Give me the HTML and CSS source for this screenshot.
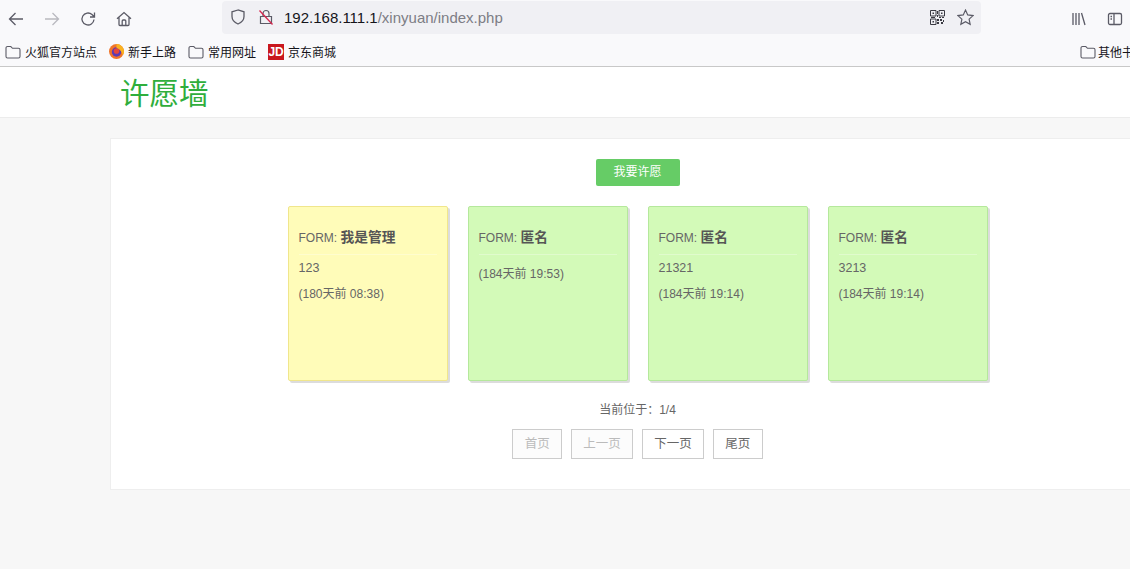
FILE: index.html
```html
<!DOCTYPE html>
<html lang="zh-CN">
<head>
    <meta charset="UTF-8">
    <meta name="viewport" content="width=device-width, initial-scale=1.0">
    <title>许愿墙</title>
    <link rel="stylesheet" href="styles.css">
</head>
<body>

<div class="browser">
    <div class="toolbar">
        <div class="nav-buttons">
            <svg class="tool-icon" viewBox="0 0 16 16"><path d="M15 8H1.500M7.500 2 1.500 8l6 6"/></svg>
            <svg class="tool-icon faded" viewBox="0 0 16 16"><path d="M1 8h13.500M8.500 2l6 6-6 6"/></svg>
            <svg class="tool-icon" viewBox="0 0 16 16"><path d="M14 8.500A6 6 0 1 1 12 3.500L14.500 6M14.500 1.500V6H10"/></svg>
            <svg class="tool-icon" viewBox="0 0 16 16"><path d="M1 7.800 8 1.500l7 6.300M3 6.500v7a1 1 0 0 0 1 1h8a1 1 0 0 0 1-1v-7M6.200 14.500V10a1 1 0 0 1 1-1h1.600a1 1 0 0 1 1 1v4.500"/></svg>
        </div>
        <div class="urlbar">
            <svg class="shield" viewBox="0 0 16 16"><path d="M8 1 2 2.800v4.700c0 3.500 2.600 6 6 7.500 3.400-1.500 6-4 6-7.500V2.800z"/></svg>
            <svg class="lock" viewBox="0 0 16 16"><path class="lock-body" d="M5 7.500V4.500a3 3 0 0 1 6 0v3M2.500 7.500h11v7h-11z"/><path class="lock-slash" d="M1.500 1.500l13 14"/></svg>
            <span class="url"><span class="url-host">192.168.111.1</span>/xinyuan/index.php</span>
            <svg class="qr" viewBox="0 0 15 15"><path d="M.5.500h5.500v5.500H.5zM9 .5h5.500v5.500H9zM.5 9h5.500v5.500H.5z"/><path class="qr-fill" d="M2.500 2.500h1.500V4H2.500zM11 2.500h1.500V4H11zM2.500 11H4v1.500H2.500zM7 1h1v3H7zM7 5h1v2H7zM1 7h4v1H1zM9 7h2v1H9zM12 7h2v1h-2zM7 9h2v2H7zM10 9h2v2h-2zM13 10h1v2h-1zM7 12h2v2H7zM11 12h2v2h-2z"/></svg>
            <svg class="star" viewBox="0 0 16 16"><path d="m8 1 2.100 4.600 5 .6-3.700 3.300 1 4.900L8 12l-4.400 2.400 1-4.900L.9 6.200l5-.6z"/></svg>
        </div>
        <div class="side-buttons">
            <svg class="tool-icon" viewBox="0 0 16 16"><path d="M2 2v12M5 2v12M8 2v12M10.500 2l3.500 12"/></svg>
            <svg class="tool-icon" viewBox="0 0 16 16"><path d="M3 2.500h10a1.500 1.500 0 0 1 1.500 1.500v8a1.500 1.500 0 0 1-1.500 1.500H3A1.500 1.500 0 0 1 1.500 12V4A1.500 1.500 0 0 1 3 2.500zM7 2.500v11M3.500 5.500h1.500M3.500 8h1.500"/></svg>
        </div>
    </div>
    <div class="bookmarks">
        <span class="bookmark">
            <svg class="folder" viewBox="0 0 16 14"><path d="M1 3a1.500 1.500 0 0 1 1.500-1.500h3.300l1.700 1.800h6A1.500 1.500 0 0 1 15 4.800v6.700a1.500 1.500 0 0 1-1.500 1.500h-11A1.500 1.500 0 0 1 1 11.500z"/></svg>
            火狐官方站点
        </span>
        <span class="bookmark">
            <svg class="fav" viewBox="0 0 16 16"><circle cx="8" cy="8" r="8" fill="#f0752a"/><circle cx="8" cy="8.500" r="5" fill="#5b3bb5"/><path d="M8 0a8 8 0 0 1 8 8c0 1.500-.5 3-1.500 4-.3-3.500-2.500-6.500-6.500-7.500z" fill="#f9b320"/><circle cx="8" cy="7.500" r="3" fill="#e5463d"/></svg>
            新手上路
        </span>
        <span class="bookmark">
            <svg class="folder" viewBox="0 0 16 14"><path d="M1 3a1.500 1.500 0 0 1 1.500-1.500h3.300l1.700 1.800h6A1.500 1.500 0 0 1 15 4.800v6.700a1.500 1.500 0 0 1-1.500 1.500h-11A1.500 1.500 0 0 1 1 11.500z"/></svg>
            常用网址
        </span>
        <span class="bookmark">
            <span class="jd">JD</span>
            京东商城
        </span>
        <span class="bookmark other">
            <svg class="folder" viewBox="0 0 16 14"><path d="M1 3a1.500 1.500 0 0 1 1.500-1.500h3.300l1.700 1.800h6A1.500 1.500 0 0 1 15 4.800v6.700a1.500 1.500 0 0 1-1.500 1.500h-11A1.500 1.500 0 0 1 1 11.500z"/></svg>
            其他书签
        </span>
    </div>
</div>

<div class="header">
    <h1 class="logo">许愿墙</h1>
</div>

<div class="main">
    <a class="wish-btn">我要许愿</a>

    <div class="notes">
        <div class="note yellow">
            <div class="note-from">FORM: <b>我是管理</b></div>
            <div class="note-text">123</div>
            <div class="note-time">(180天前 08:38)</div>
        </div>
        <div class="note">
            <div class="note-from">FORM: <b>匿名</b></div>
            <div class="note-text"></div>
            <div class="note-time">(184天前 19:53)</div>
        </div>
        <div class="note">
            <div class="note-from">FORM: <b>匿名</b></div>
            <div class="note-text">21321</div>
            <div class="note-time">(184天前 19:14)</div>
        </div>
        <div class="note">
            <div class="note-from">FORM: <b>匿名</b></div>
            <div class="note-text">3213</div>
            <div class="note-time">(184天前 19:14)</div>
        </div>
    </div>

    <div class="page-info">当前位于：1/4</div>
    <div class="pager">
        <a class="disabled">首页</a>
        <a class="disabled">上一页</a>
        <a>下一页</a>
        <a>尾页</a>
    </div>
</div>

</body>
</html>
```

FILE: styles.css
```css
html, body {
    overflow: hidden;
}
body {
    margin: 0;
    height: 569px;
    background-color: #f7f7f7;
    font-family: "Liberation Sans", "Noto Sans CJK SC", sans-serif;
    color: #666;
}

/* browser chrome */
.browser {
    background-color: #f9f9fb;
    border-bottom: 1px solid #c8c8c8;
    height: 66px;
}
.toolbar {
    height: 37px;
    display: flex;
    align-items: center;
}
.nav-buttons {
    display: flex;
    gap: 20px;
    padding-left: 8px;
    width: 222px;
    box-sizing: border-box;
}
.tool-icon {
    width: 16px;
    height: 16px;
    fill: none;
    stroke: #5b5b66;
    stroke-width: 1.300;
    flex: none;
}
.tool-icon.faded {
    stroke: #b9b9bf;
}
.urlbar {
    width: 759px;
    height: 33px;
    margin-top: -3px;
    background-color: #f0f0f4;
    border-radius: 4px;
    display: flex;
    align-items: center;
    padding: 0 8px;
    box-sizing: border-box;
}
.shield {
    width: 16px;
    height: 16px;
    fill: none;
    stroke: #5b5b66;
    stroke-width: 1.300;
    flex: none;
}
.lock {
    width: 16px;
    height: 16px;
    margin-left: 12px;
    fill: none;
    flex: none;
}
.lock-body {
    stroke: #5b5b66;
    stroke-width: 1.200;
}
.lock-slash {
    stroke: #d7264f;
    stroke-width: 1.300;
}
.url {
    margin-left: 10px;
    padding-top: 1px;
    font-size: 15px;
    color: #7d7d85;
    flex: 1;
}
.url-host {
    color: #15141a;
}
.qr {
    width: 15px;
    height: 15px;
    fill: none;
    stroke: #3a3a42;
    stroke-width: 1;
    flex: none;
}
.qr-fill {
    fill: #3a3a42;
    stroke: none;
}
.star {
    width: 17px;
    height: 17px;
    margin-left: 12px;
    margin-right: -1px;
    fill: none;
    stroke: #5b5b66;
    stroke-width: 1.100;
    flex: none;
}
.side-buttons {
    display: flex;
    gap: 20px;
    margin-left: 90px;
}
.bookmarks {
    height: 29px;
    display: flex;
    align-items: center;
    padding-left: 5px;
    position: relative;
    font-size: 12px;
    color: #15141a;
}
.bookmark {
    display: flex;
    align-items: center;
    gap: 4px;
    margin-right: 12px;
    white-space: nowrap;
}
.bookmark.other {
    position: absolute;
    left: 1080px;
    top: 6px;
    gap: 2px;
}
.folder {
    width: 16px;
    height: 14px;
    fill: none;
    stroke: #5b5b66;
    stroke-width: 1.100;
}
.fav {
    width: 15px;
    height: 15px;
}
.jd {
    width: 16px;
    height: 16px;
    background-color: #c9171e;
    color: #fff;
    font-size: 12px;
    font-weight: bold;
    line-height: 16px;
    text-align: center;
}

/* page */
.header {
    height: 50px;
    background: #fff;
    border-bottom: 1px solid #ececec;
}
.logo {
    margin: 0 0 0 120px;
    font-size: 29.500px;
    font-weight: normal;
    line-height: 53px;
    color: #2fae3c;
}
.main {
    margin: 20px 0 0 110px;
    width: 1020px;
    height: 352px;
    background: #fff;
    border: 1px solid #eee;
    border-right: 0;
    box-sizing: border-box;
    display: flex;
    flex-direction: column;
    align-items: center;
    padding: 20px 0 0 34px;
}
.wish-btn {
    width: 84px;
    height: 27px;
    background-color: #66cc66;
    border-radius: 2px;
    color: #fff;
    font-size: 12px;
    line-height: 27px;
    text-align: center;
}
.notes {
    display: flex;
    gap: 20px;
    margin-top: 20px;
}
.note {
    width: 160px;
    height: 175px;
    box-sizing: border-box;
    background-color: #d3fab8;
    border: 1px solid #b5e89c;
    border-radius: 2px;
    box-shadow: 2px 2px 0 #dcdcdc;
    padding: 19px 10px 0;
}
.note.yellow {
    background-color: #fffcb9;
    border-color: #f0e68c;
}
.note-from {
    font-size: 12px;
    line-height: 20px;
    padding-bottom: 6px;
    border-bottom: 1px solid rgba(255, 255, 255, 0.300);
}
.note-from b {
    font-size: 13.750px;
    color: #555;
    font-family: "Noto Sans CJK SC", sans-serif;
}
.note-text {
    font-size: 12.500px;
    line-height: 18px;
    margin-top: 4px;
}
.note-text:empty {
    height: 2px;
    margin-top: 0;
}
.note-time {
    font-size: 12px;
    line-height: 18px;
    margin-top: 8px;
}
.page-info {
    font-size: 12px;
    line-height: 18px;
    margin-top: 20px;
}
.pager {
    display: flex;
    gap: 9px;
    margin-top: 10px;
}
.pager a {
    height: 30px;
    box-sizing: border-box;
    padding: 0 11.250px;
    border: 1px solid #ccc;
    font-size: 12.500px;
    line-height: 28px;
    color: #666;
}
.pager a.disabled {
    color: #bbb;
    background-color: #fcfcfc;
}
```
